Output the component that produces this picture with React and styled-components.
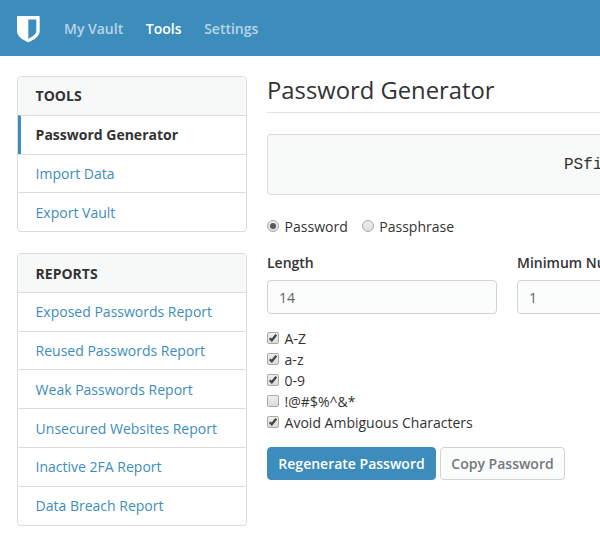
import React from 'react';
import styled, { createGlobalStyle, css } from 'styled-components';

const Global = createGlobalStyle`
  * { box-sizing: border-box; }
  body { margin: 0; background: #fff; color: #333; overflow: hidden;
    font: 14px/21px "Open Sans", "Noto Sans", sans-serif; }
`;
const Page = styled.div`width: 600px; height: 547px; overflow: hidden;`;
const Navbar = styled.nav`
  height: 56px; background: #3c8dbc; display: flex; align-items: center; padding: 0 17px;
`;
const Logo = styled.svg`width: 23px; height: 27px; margin: 3px 24px 0 0; display: block; flex: none;`;
const NavLink = styled.a`
  font-size: 14px; font-weight: 600; margin-right: 22.6px;
  color: ${p => (p.$active ? '#fff' : 'rgba(255,255,255,.65)')};
`;
const Content = styled.div`display: flex; gap: 20px; padding: 20px 0 0 17px;`;
const Sidebar = styled.aside`width: 230px; flex: none; display: flex; flex-direction: column; gap: 20.94px;`;
const Card = styled.section`border: 1px solid #dadddd; border-radius: 4px; overflow: hidden;`;
const CardHeader = styled.h2`
  margin: 0; height: 37.75px; padding: 8.47px 17.6px 0; background: #f7f9f9; font-size: 14px; line-height: 21px; font-weight: 700;
`;
const CardItem = styled.a`
  display: block; height: 38.8px; border-top: 1px solid #dadddd; line-height: 38px; padding-top: .35px;
  padding-left: ${p => (p.$active ? 14.6 : 17.6)}px;
  border-left: ${p => (p.$active ? '3px solid #3c8dbc' : '0')};
  color: ${p => (p.$active ? '#333' : '#3c8dbc')};
  font-weight: ${p => (p.$active ? 700 : 400)};
`;
const Main = styled.main`width: 730px; flex: none;`;
const Title = styled.h1`
  margin: 0; height: 37px; font-size: 23.8px; line-height: 28px; font-weight: 400; border-bottom: 1px solid #dee2e6;
`;
const Output = styled.div`
  margin-top: 21px; height: 61px; border: 1px solid #d8dbdb; border-radius: 3px; background: #f8faf9;
  padding: 1px 0 0 296px; font: 16px/59px "Liberation Mono", monospace; white-space: nowrap;
`;
const Radios = styled.div`display: flex; gap: 14px; margin-top: 21px;`;
const Option = styled.label`display: flex; align-items: center; height: 21px; gap: 5.6px; white-space: nowrap;`;
const controlBox = css`
  appearance: none; flex: none; margin: 0 0 2px; width: 12px; height: 12px;
  border: 1px solid #a9a9a9; background: linear-gradient(#eee, #dcdcdc);
`;
const Radio = styled.input`
  ${controlBox}
  border-radius: 50%; display: grid; place-items: center;
  &:checked::before { content: ''; width: 6px; height: 6px; border-radius: 50%; background: #5a5a5a; }
`;
const Checkbox = styled.input`${controlBox} border-radius: 2px;`;
const CheckSlot = styled.span`display: grid; flex: none;
  & > * { grid-area: 1 / 1; }
`;
const Tick = styled.svg`width: 12px; height: 12px; pointer-events: none;`;
const Fields = styled.div`display: flex; gap: 20px; margin-top: 15px;`;
const Field = styled.label`width: 230px; flex: none; font-weight: 600;`;
const TextInput = styled.input`
  display: block; width: 100%; height: 34px; margin-top: 7px; padding: 6px 11px;
  font: 14px/21px "Open Sans", sans-serif; color: #5f6468; border: 1px solid #ced4da; border-radius: 4px; background: #fbfdfc;
`;
const Checks = styled.div`margin-top: 14px;`;
const Actions = styled.div`display: flex; gap: 4px; margin-top: 14px;`;
const Button = styled.button`
  height: 33px; padding: 0; width: ${p => p.$width}px; border-radius: 4px; font: 600 14px/21px "Open Sans", sans-serif;
  border: 1px solid ${p => (p.$primary ? '#3c8dbc' : '#ced4da')};
  background: ${p => (p.$primary ? '#3c8dbc' : '#fbfdfc')}; color: ${p => (p.$primary ? '#fff' : '#73787c')};
`;

const tools = ['Password Generator', 'Import Data', 'Export Vault'];
const reports = ['Exposed Passwords Report', 'Reused Passwords Report', 'Weak Passwords Report', 'Unsecured Websites Report', 'Inactive 2FA Report', 'Data Breach Report'];
const checks = [['A-Z', true], ['a-z', true], ['0-9', true], ['!@#$%^&*', false], ['Avoid Ambiguous Characters', true]];

function CheckOption({ label, initial }) {
  const [on, setOn] = React.useState(initial);
  return (
    <Option>
      <CheckSlot>
        <Checkbox type="checkbox" checked={on} onChange={() => setOn(!on)} />
        {on && <Tick viewBox="0 0 12 12"><path d="M2.700 6.200L4.800 8.300L9.300 2.700" fill="none" stroke="#444" strokeWidth="2.300" /></Tick>}
      </CheckSlot>
      {label}
    </Option>
  );
}

export default function App() {
  return (
    <Page>
      <Global />
      <Navbar>
        <Logo viewBox="0 0 23 27">
          <path fill="#fff" fillRule="evenodd" d="M1 0h20.700q1 0 1 1v14c0 5-5 8.700-11.400 11.200C5 23.700 0 20 0 15V1q0-1 1-1zm10.300 3.400v19.400c4.400-2.200 8-4.500 8-8V3.400z" />
        </Logo>
        <NavLink>My Vault</NavLink><NavLink $active>Tools</NavLink><NavLink>Settings</NavLink>
      </Navbar>
      <Content>
        <Sidebar>
          <Card><CardHeader>TOOLS</CardHeader>{tools.map((t, i) => <CardItem key={t} $active={i === 0}>{t}</CardItem>)}</Card>
          <Card><CardHeader>REPORTS</CardHeader>{reports.map(t => <CardItem key={t}>{t}</CardItem>)}</Card>
        </Sidebar>
        <Main>
          <Title>Password Generator</Title>
          <Output>PSfiKa5tQx9BmW</Output>
          <Radios>
            <Option><Radio type="radio" name="type" defaultChecked />Password</Option>
            <Option><Radio type="radio" name="type" />Passphrase</Option>
          </Radios>
          <Fields>
            <Field>Length<TextInput defaultValue="14" /></Field>
            <Field>Minimum Numbers<TextInput defaultValue="1" /></Field>
          </Fields>
          <Checks>{checks.map(([t, on]) => <CheckOption key={t} label={t} initial={on} />)}</Checks>
          <Actions><Button $primary $width={169}>Regenerate Password</Button><Button $width={125}>Copy Password</Button></Actions>
        </Main>
      </Content>
    </Page>
  );
}
